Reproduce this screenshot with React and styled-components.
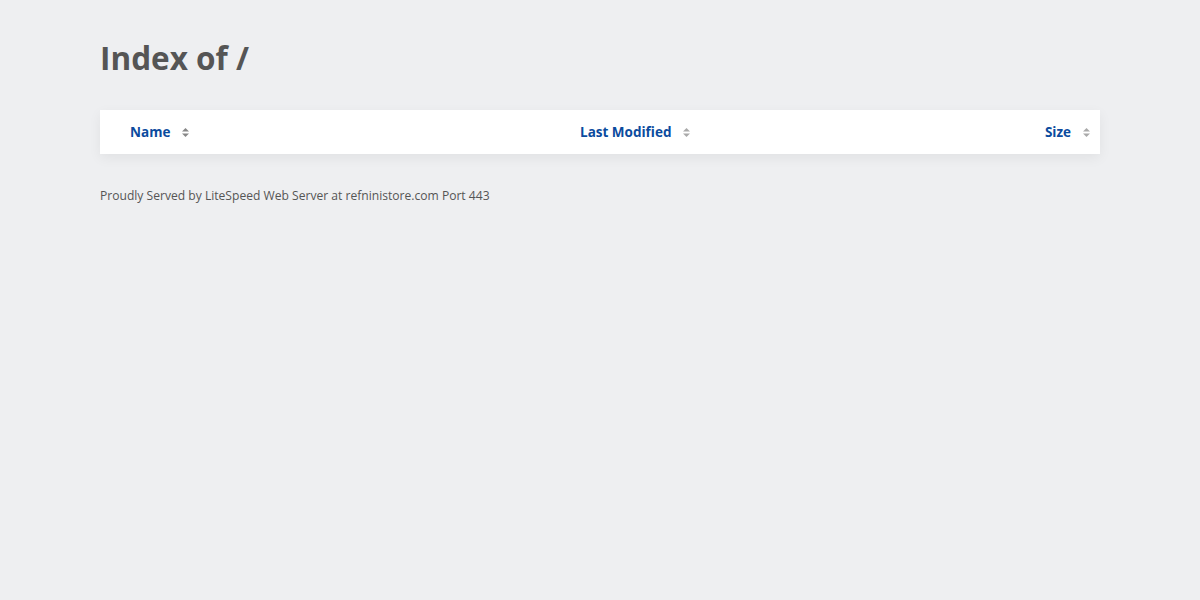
import React from 'react';
import styled, { createGlobalStyle } from 'styled-components';

const GlobalStyle = createGlobalStyle`
    html, body {
        margin: 0;
        padding: 0;
        background: #eeeff1;
    }
    body {
        font-family: "Open Sans", "Noto Sans", "Liberation Sans", sans-serif;
        color: #555;
    }
`

const Page = styled.div`
    padding: 36px 100px 0;
`

const Title = styled.h1`
    margin: 0 0 30px;
    font-size: 31.5px;
    line-height: 44px;
    font-weight: 700;
    color: #555;
`

const Table = styled.div`
    background: #fff;
    box-shadow: 0 4px 12px rgba(0, 0, 0, 0.06);
    display: grid;
    grid-template-columns: 45% 1fr 200px;
    height: 44px;
    align-items: center;
`

const HeadCell = styled.div`
    display: flex;
    align-items: center;
    justify-content: ${p => p.right ? 'flex-end' : 'flex-start'};
    padding: ${p => p.right ? '0 9px 0 0' : '0 0 0 30px'};
    font-size: 13.5px;
    font-weight: 700;
    color: #0b4b9e;
    gap: 11px;
`

const SortIcon = ({ color }) => (
    <svg width="9" height="11" viewBox="0 0 9 11">
        <path d="M4.5 1 L8 4.5 L1 4.5 Z" fill={color} />
        <path d="M4.5 10 L8 6.5 L1 6.5 Z" fill={color} />
    </svg>
)

const Footer = styled.p`
    margin: 33px 0 0;
    font-size: 12.1px;
    color: #555;
`

export default function App() {
    return (
        <>
            <GlobalStyle />
            <Page>
                <Title>Index of /</Title>
                <Table>
                    <HeadCell>Name <SortIcon color="#888" /></HeadCell>
                    <HeadCell>Last Modified <SortIcon color="#aaa" /></HeadCell>
                    <HeadCell right>Size <SortIcon color="#aaa" /></HeadCell>
                </Table>
                <Footer>Proudly Served by LiteSpeed Web Server at refninistore.com Port 443</Footer>
            </Page>
        </>
    )
}
